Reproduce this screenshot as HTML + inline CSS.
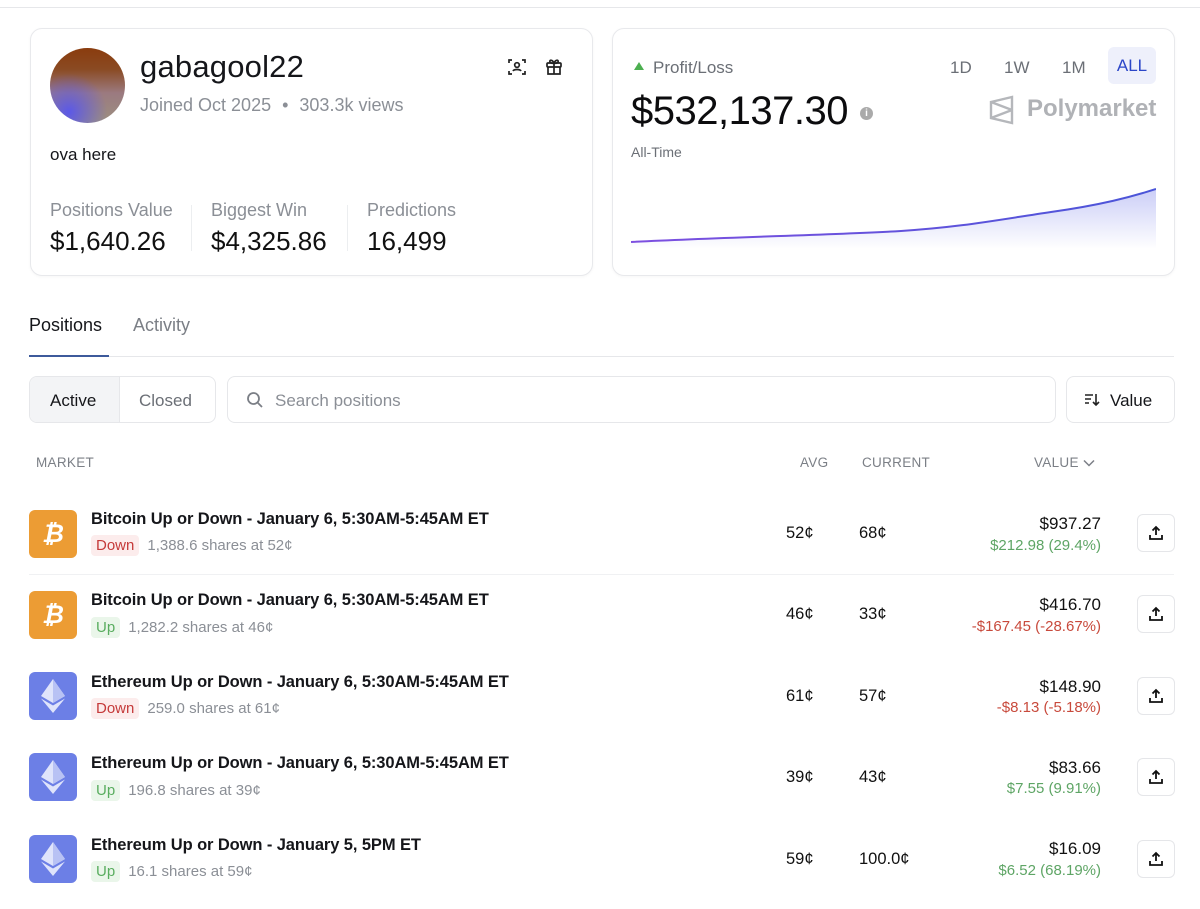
<!DOCTYPE html>
<html><head><style>
*{box-sizing:border-box;margin:0;padding:0}
body{width:1200px;height:909px;background:#fff;font-family:"Liberation Sans",sans-serif;position:relative;overflow:hidden;color:#111}
.a{position:absolute}
.card{position:absolute;border:1px solid #e8e9ec;border-radius:12px;background:#fff;box-shadow:0 1px 3px rgba(0,0,0,.04)}
.g{color:#7b7f86}
.row .t{font-size:16.5px;font-weight:bold;color:#15161a;letter-spacing:-.1px}
.tag{display:inline-block;padding:2px 5px;border-radius:4px;font-size:15px;margin-right:8px}
.dn{background:#fcecec;color:#c53a3a}
.up{background:#eaf6ea;color:#59ad5f}
.ic{position:absolute;left:29px;width:48px;height:48px;border-radius:6px;display:flex;align-items:center;justify-content:center}
.btc{background:#ec9c34;color:#fff;font-size:25px;font-weight:bold;font-style:italic}
.eth{background:#6c7fe6}
.sh{border:1px solid #e5e6e9;border-radius:6px;width:38px;height:38px;position:absolute;left:1137px;display:flex;align-items:center;justify-content:center}
.num{position:absolute;font-size:16.5px;color:#111}
</style></head><body>
<div class="a" style="left:0;top:7px;width:1200px;height:1px;background:#e6e7ea"></div>

<div class="card" style="left:30px;top:28px;width:563px;height:248px">
  <div class="a" style="left:19px;top:19px;width:75px;height:75px;border-radius:50%;background:radial-gradient(circle at 25% 85%,#5b58e8 0%,rgba(91,88,232,0) 45%),linear-gradient(180deg,#8a3c0e 0%,#8a4a22 28%,#9b7a80 60%,#9c9080 100%)"></div>
  <div class="a" style="left:109px;top:20px;font-size:31px;color:#15161a;letter-spacing:.2px">gabagool22</div>
  <div class="a g" style="left:109px;top:66px;font-size:18px;color:#8b8f96">Joined Oct 2025 <span style="margin:0 6px">•</span> 303.3k views</div>
  <svg class="a" style="left:476px;top:28px" width="20" height="20" viewBox="0 0 20 20" fill="none" stroke="#222" stroke-width="1.7"><path d="M2 6V3h3M15 3h3v3M18 14v3h-3M5 17H2v-3"/><circle cx="10" cy="8" r="2.3"/><path d="M6 14c1-2 7-2 8 0"/></svg>
  <svg class="a" style="left:513px;top:27px" width="20" height="20" viewBox="0 0 20 20" fill="none" stroke="#222" stroke-width="1.7"><rect x="3" y="7" width="14" height="4" rx="1"/><path d="M4 11v7h12v-7M10 7v11M10 7C8 3 5 4 6 6s4 1 4 1c0 0 3 1 4-1s-2-3-4 1"/></svg>
  <div class="a" style="left:19px;top:116px;font-size:17px;color:#15161a">ova here</div>
  <div class="a g" style="left:19px;top:171px;font-size:18px;color:#8b8f96">Positions Value</div>
  <div class="a" style="left:19px;top:197px;font-size:26px">$1,640.26</div>
  <div class="a" style="left:160px;top:176px;width:1px;height:46px;background:#eceef0"></div>
  <div class="a g" style="left:180px;top:171px;font-size:18px;color:#8b8f96">Biggest Win</div>
  <div class="a" style="left:180px;top:197px;font-size:26px">$4,325.86</div>
  <div class="a" style="left:316px;top:176px;width:1px;height:46px;background:#eceef0"></div>
  <div class="a g" style="left:336px;top:171px;font-size:18px;color:#8b8f96">Predictions</div>
  <div class="a" style="left:336px;top:197px;font-size:26px">16,499</div>
</div>

<div class="card" style="left:612px;top:28px;width:563px;height:248px">
  <div class="a" style="left:21px;top:33px;width:0;height:0;border-left:5px solid transparent;border-right:5px solid transparent;border-bottom:8px solid #4caf50"></div>
  <div class="a" style="left:40px;top:29px;font-size:17px;color:#6b6f76">Profit/Loss</div>
  <div class="a" style="left:337px;top:29px;font-size:17px;color:#6b6f76">1D</div>
  <div class="a" style="left:391px;top:29px;font-size:17px;color:#6b6f76">1W</div>
  <div class="a" style="left:449px;top:29px;font-size:17px;color:#6b6f76">1M</div>
  <div class="a" style="left:495px;top:18px;width:48px;height:37px;border-radius:6px;background:#eef0fb;color:#2b46c8;font-size:17px;text-align:center;line-height:37px">ALL</div>
  <div class="a" style="left:18px;top:60px;font-size:40px;color:#0c0c0e;letter-spacing:-.5px">$532,137.30</div>
  <div class="a" style="left:247px;top:78px;width:13px;height:13px;border-radius:50%;background:#aaa;color:#fff;font-size:10px;text-align:center;line-height:13px;font-weight:bold">i</div>
  <svg class="a" style="left:376px;top:66px" width="26" height="30" viewBox="0 0 26 30" fill="none" stroke="#b5b7bb" stroke-width="2.4"><path d="M2 7L23 2v26L2 23z M2 7l21 8M2 23l21-8"/></svg>
  <div class="a" style="left:414px;top:66px;font-size:24px;color:#b0b2b6;font-weight:bold">Polymarket</div>
  <div class="a" style="left:18px;top:115px;font-size:14px;color:#6b6f76">All-Time</div>
  <svg class="a" style="left:18px;top:150px" width="525" height="70" viewBox="0 0 525 70">
    <defs><linearGradient id="f" x1="0" y1="0" x2="0" y2="1"><stop offset="0" stop-color="#6a72e8" stop-opacity=".35"/><stop offset="1" stop-color="#6a72e8" stop-opacity="0"/></linearGradient>
    <linearGradient id="l" x1="0" x2="1"><stop offset="0" stop-color="#7d4fe0"/><stop offset="1" stop-color="#4a55d8"/></linearGradient></defs>
    <path d="M0 63 C100 58 200 56 270 52 C330 48 360 42 420 33 C470 26 500 18 525 10 L525 70 L0 70Z" fill="url(#f)"/>
    <path d="M0 63 C100 58 200 56 270 52 C330 48 360 42 420 33 C470 26 500 18 525 10" fill="none" stroke="url(#l)" stroke-width="2"/>
  </svg>
</div>

<div class="a" style="left:29px;top:315px;font-size:18px;color:#15161a">Positions</div>
<div class="a" style="left:133px;top:315px;font-size:18px;color:#7b7f86">Activity</div>
<div class="a" style="left:29px;top:356px;width:1145px;height:1px;background:#e6e7ea"></div>
<div class="a" style="left:29px;top:355px;width:80px;height:2px;background:#3d5a9b"></div>

<div class="a" style="left:29px;top:376px;width:187px;height:47px;border:1px solid #e6e7ea;border-radius:8px;overflow:hidden">
  <div class="a" style="left:0;top:0;width:90px;height:47px;background:#f3f4f6;border-right:1px solid #e6e7ea"></div>
  <div class="a" style="left:20px;top:14px;font-size:17px;color:#15161a">Active</div>
  <div class="a" style="left:109px;top:14px;font-size:17px;color:#6b6f76">Closed</div>
</div>
<div class="a" style="left:227px;top:376px;width:829px;height:47px;border:1px solid #e6e7ea;border-radius:8px">
  <svg class="a" style="left:18px;top:14px" width="18" height="18" viewBox="0 0 18 18" fill="none" stroke="#7b7f86" stroke-width="1.8"><circle cx="7.5" cy="7.5" r="5.5"/><path d="M11.5 11.5L16 16"/></svg>
  <div class="a" style="left:47px;top:14px;font-size:17px;color:#8b8f96">Search positions</div>
</div>
<div class="a" style="left:1066px;top:376px;width:109px;height:47px;border:1px solid #e6e7ea;border-radius:8px">
  <svg class="a" style="left:17px;top:15px" width="16" height="16" viewBox="0 0 16 16" fill="none" stroke="#222" stroke-width="1.6"><path d="M1 3h8M1 7h6M1 11h4M12 2v11M9 10l3 3 3-3"/></svg>
  <div class="a" style="left:43px;top:14px;font-size:17px;color:#15161a">Value</div>
</div>

<div class="a" style="left:36px;top:455px;font-size:13.5px;color:#7b7f86;letter-spacing:.3px">MARKET</div>
<div class="a" style="left:800px;top:455px;font-size:13.5px;color:#7b7f86;letter-spacing:.3px">AVG</div>
<div class="a" style="left:862px;top:455px;font-size:13.5px;color:#7b7f86;letter-spacing:.3px">CURRENT</div>
<div class="a" style="left:1034px;top:455px;font-size:13.5px;color:#7b7f86;letter-spacing:.3px">VALUE <svg width="12" height="8" viewBox="0 0 12 8" fill="none" stroke="#7b7f86" stroke-width="1.5"><path d="M1 1.5l5 5 5-5"/></svg></div>

<!-- rows -->
<div class="row">
 <div class="ic btc" style="top:510px">₿</div>
 <div class="a t" style="left:91px;top:510px">Bitcoin Up or Down - January 6, 5:30AM-5:45AM ET</div>
 <div class="a" style="left:91px;top:535px;font-size:15px;color:#8b8f96"><span class="tag dn">Down</span>1,388.6 shares at 52¢</div>
 <div class="num" style="left:786px;top:524px">52¢</div><div class="num" style="left:859px;top:524px">68¢</div>
 <div class="num" style="right:99px;top:514px;font-size:17px">$937.27</div>
 <div class="a" style="right:99px;top:537px;font-size:15px;color:#5ea565">$212.98 (29.4%)</div>
 <div class="sh" style="top:514px"><svg width="16" height="16" viewBox="0 0 16 16" fill="none" stroke="#111" stroke-width="1.8"><path d="M8 10V2M4.5 5.5L8 2l3.5 3.5M2 10v4h12v-4"/></svg></div>
</div>
<div class="a" style="left:29px;top:574px;width:1145px;height:1px;background:#f0f1f3"></div>
<div class="row">
 <div class="ic btc" style="top:591px">₿</div>
 <div class="a t" style="left:91px;top:591px">Bitcoin Up or Down - January 6, 5:30AM-5:45AM ET</div>
 <div class="a" style="left:91px;top:617px;font-size:15px;color:#8b8f96"><span class="tag up">Up</span>1,282.2 shares at 46¢</div>
 <div class="num" style="left:786px;top:605px">46¢</div><div class="num" style="left:859px;top:605px">33¢</div>
 <div class="num" style="right:99px;top:595px;font-size:17px">$416.70</div>
 <div class="a" style="right:99px;top:618px;font-size:15px;color:#c84a3c">-$167.45 (-28.67%)</div>
 <div class="sh" style="top:595px"><svg width="16" height="16" viewBox="0 0 16 16" fill="none" stroke="#111" stroke-width="1.8"><path d="M8 10V2M4.5 5.5L8 2l3.5 3.5M2 10v4h12v-4"/></svg></div>
</div>
<div class="row">
 <div class="ic eth" style="top:672px"><svg width="24" height="34" viewBox="0 0 24 34"><path d="M12 0L0 17l12 7 12-7z" fill="#dfe4fb"/><path d="M12 0v24l12-7z" fill="#b8c2f4"/><path d="M0 19.5L12 34l12-14.5-12 7z" fill="#dfe4fb"/></svg></div>
 <div class="a t" style="left:91px;top:673px">Ethereum Up or Down - January 6, 5:30AM-5:45AM ET</div>
 <div class="a" style="left:91px;top:698px;font-size:15px;color:#8b8f96"><span class="tag dn">Down</span>259.0 shares at 61¢</div>
 <div class="num" style="left:786px;top:687px">61¢</div><div class="num" style="left:859px;top:687px">57¢</div>
 <div class="num" style="right:99px;top:677px;font-size:17px">$148.90</div>
 <div class="a" style="right:99px;top:699px;font-size:15px;color:#c84a3c">-$8.13 (-5.18%)</div>
 <div class="sh" style="top:677px"><svg width="16" height="16" viewBox="0 0 16 16" fill="none" stroke="#111" stroke-width="1.8"><path d="M8 10V2M4.5 5.5L8 2l3.5 3.5M2 10v4h12v-4"/></svg></div>
</div>
<div class="row">
 <div class="ic eth" style="top:753px"><svg width="24" height="34" viewBox="0 0 24 34"><path d="M12 0L0 17l12 7 12-7z" fill="#dfe4fb"/><path d="M12 0v24l12-7z" fill="#b8c2f4"/><path d="M0 19.5L12 34l12-14.5-12 7z" fill="#dfe4fb"/></svg></div>
 <div class="a t" style="left:91px;top:754px">Ethereum Up or Down - January 6, 5:30AM-5:45AM ET</div>
 <div class="a" style="left:91px;top:780px;font-size:15px;color:#8b8f96"><span class="tag up">Up</span>196.8 shares at 39¢</div>
 <div class="num" style="left:786px;top:768px">39¢</div><div class="num" style="left:859px;top:768px">43¢</div>
 <div class="num" style="right:99px;top:758px;font-size:17px">$83.66</div>
 <div class="a" style="right:99px;top:780px;font-size:15px;color:#5ea565">$7.55 (9.91%)</div>
 <div class="sh" style="top:758px"><svg width="16" height="16" viewBox="0 0 16 16" fill="none" stroke="#111" stroke-width="1.8"><path d="M8 10V2M4.5 5.5L8 2l3.5 3.5M2 10v4h12v-4"/></svg></div>
</div>
<div class="row">
 <div class="ic eth" style="top:835px"><svg width="24" height="34" viewBox="0 0 24 34"><path d="M12 0L0 17l12 7 12-7z" fill="#dfe4fb"/><path d="M12 0v24l12-7z" fill="#b8c2f4"/><path d="M0 19.5L12 34l12-14.5-12 7z" fill="#dfe4fb"/></svg></div>
 <div class="a t" style="left:91px;top:836px">Ethereum Up or Down - January 5, 5PM ET</div>
 <div class="a" style="left:91px;top:861px;font-size:15px;color:#8b8f96"><span class="tag up">Up</span>16.1 shares at 59¢</div>
 <div class="num" style="left:786px;top:850px">59¢</div><div class="num" style="left:859px;top:850px">100.0¢</div>
 <div class="num" style="right:99px;top:839px;font-size:17px">$16.09</div>
 <div class="a" style="right:99px;top:862px;font-size:15px;color:#5ea565">$6.52 (68.19%)</div>
 <div class="sh" style="top:840px"><svg width="16" height="16" viewBox="0 0 16 16" fill="none" stroke="#111" stroke-width="1.8"><path d="M8 10V2M4.5 5.5L8 2l3.5 3.5M2 10v4h12v-4"/></svg></div>
</div>
</body></html>
